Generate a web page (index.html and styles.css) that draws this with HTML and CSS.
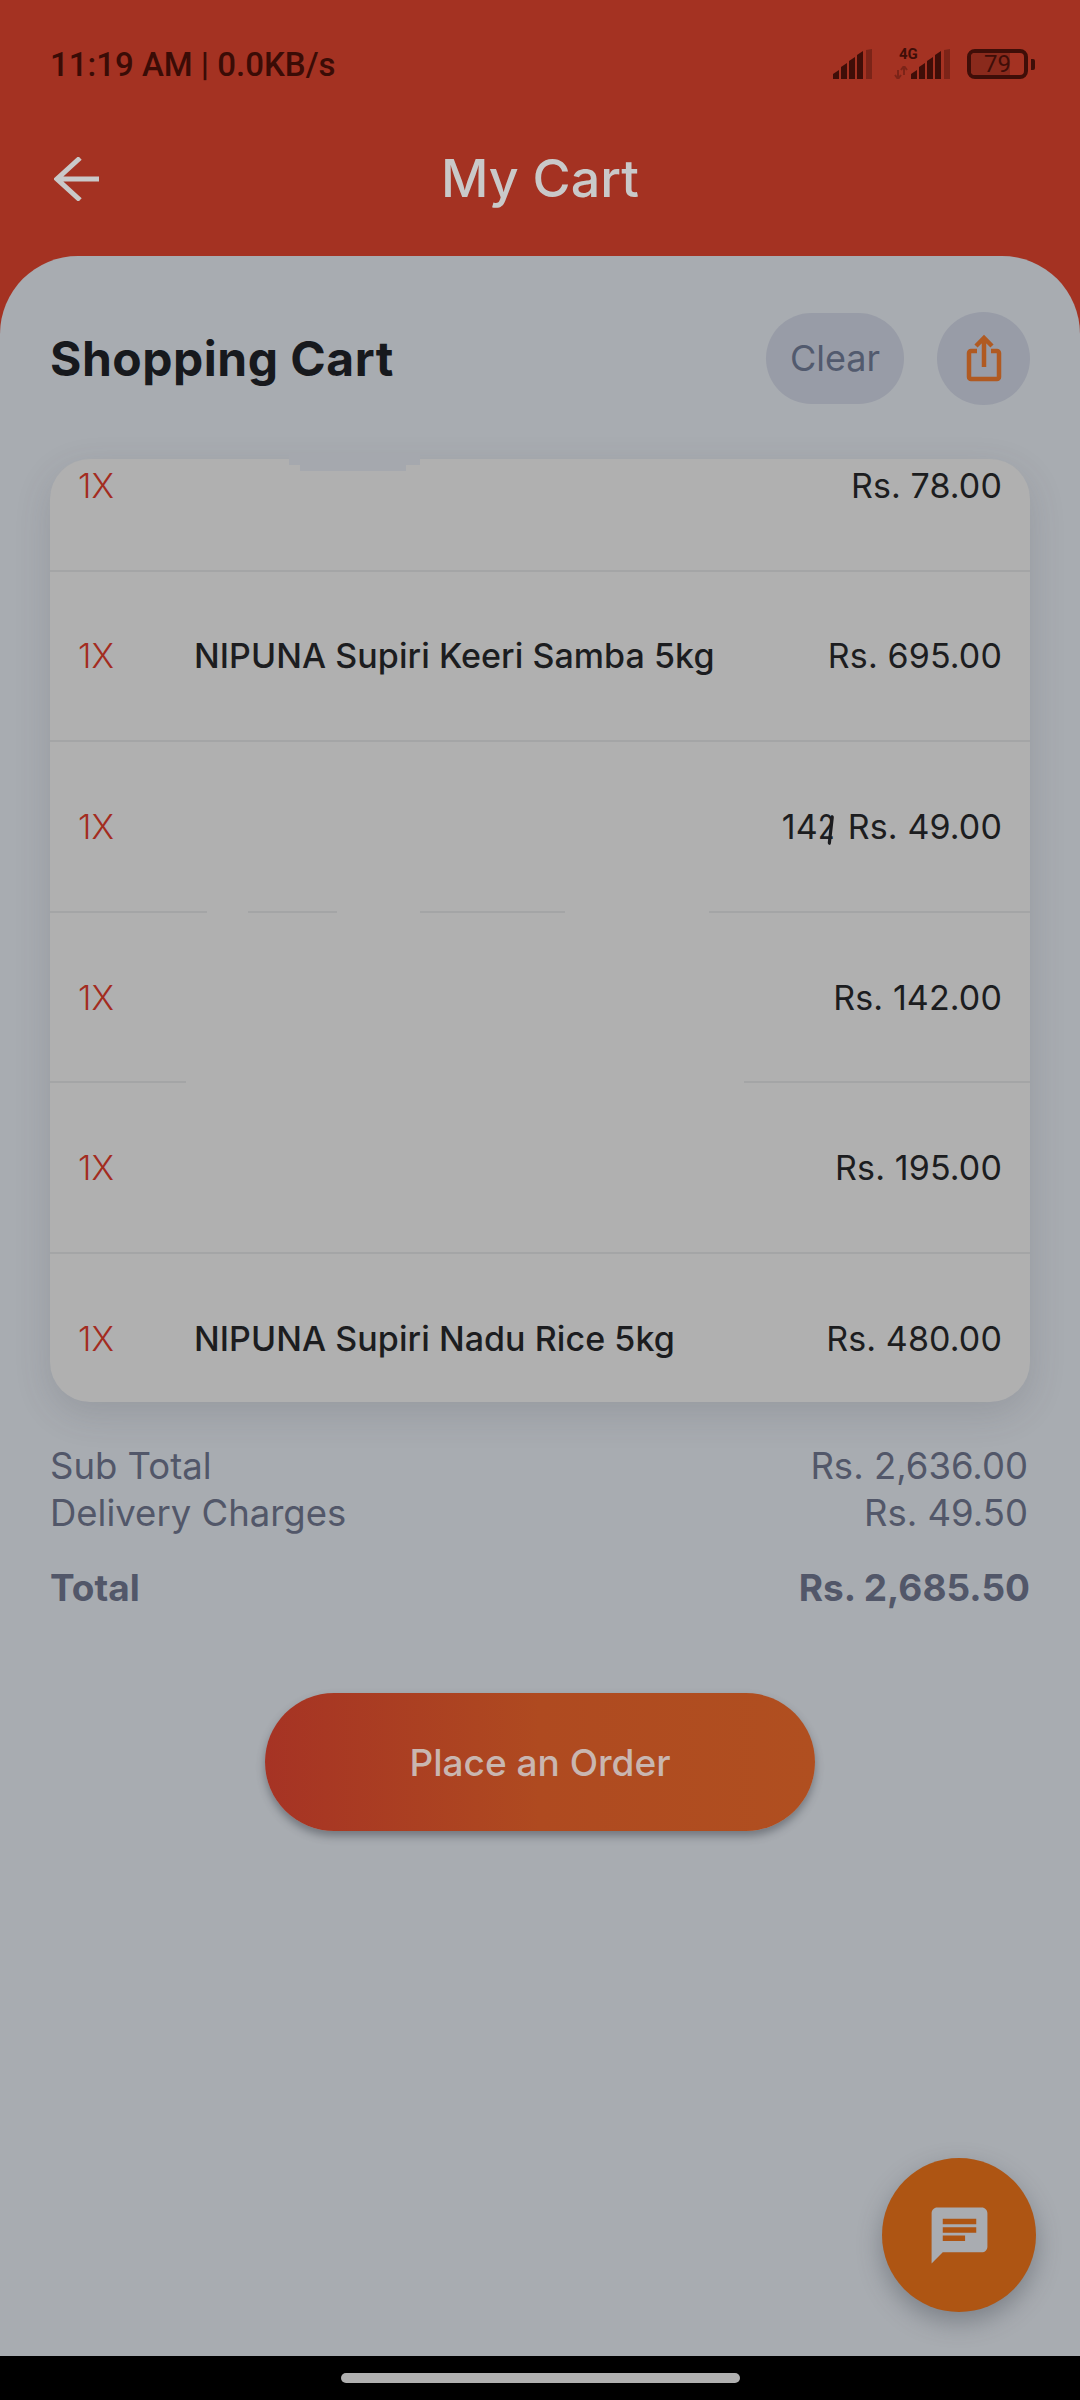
FILE: index.html
```html
<!DOCTYPE html>
<html lang="en">
<head>
  <meta charset="UTF-8" />
  <meta name="viewport" content="width=device-width, initial-scale=1.0"/>
  <title>My Cart</title>
  <link rel="stylesheet" href="styles.css">
</head>
<body>
  <div class="screen">
    <div class="status-bar">
      <span class="clock">11:19 AM | 0.0KB/s</span>
      <div class="status-icons">
        <svg class="signal" width="40" height="30" viewBox="0 0 40 30">
          <path class="on" d="M0 30v-5l6-4v9zM8 30V18l6-4v16zM16 30V12l6-4v22zM24 30V6l6-4v28z"/>
          <path class="off" d="M33 30V1l6-1v30z"/>
        </svg>
        <div class="net">
          <span class="net-label">4G</span>
          <svg class="net-arrows" width="14" height="13" viewBox="0 0 14 13">
            <path d="M4 13V4M1 9l3 4 3-4M10 0v9M7 4l3-4 3 4" fill="none" stroke="#7c2418" stroke-width="2"/>
          </svg>
        </div>
        <svg class="signal" width="40" height="30" viewBox="0 0 40 30">
          <path class="on" d="M0 30v-5l6-4v9zM8 30V18l6-4v16zM16 30V12l6-4v22zM24 30V6l6-4v28z"/>
          <path class="off" d="M33 30V1l6-1v30z"/>
        </svg>
        <div class="battery">
          <div class="battery-fill"></div>
          <span class="battery-level">79</span>
        </div>
        <div class="battery-nub"></div>
      </div>
    </div>

    <div class="app-bar">
      <svg class="back" width="46" height="44" viewBox="0 0 46 44">
        <path d="M45 22H4M26 1L3 22l23 21" fill="none" stroke="#c9c9c9" stroke-width="5"/>
      </svg>
      <h1>My Cart</h1>
    </div>

    <div class="sheet">
      <div class="sheet-head">
        <h2>Shopping Cart</h2>
        <div class="actions">
          <button class="clear-btn">Clear</button>
          <button class="share-btn">
            <svg width="36" height="48" viewBox="0 0 36 48">
              <path d="M11 17H5a2 2 0 0 0-2 2v24a2 2 0 0 0 2 2h26a2 2 0 0 0 2-2V19a2 2 0 0 0-2-2h-6" fill="none" stroke="#b05a22" stroke-width="4.5"/>
              <path d="M18 33V5M10 12l8-8 8 8" fill="none" stroke="#b05a22" stroke-width="4.5"/>
            </svg>
          </button>
        </div>
      </div>

      <div class="cart-card">
        <div class="cart-list">
          <div class="cart-row">
            <span class="qty">1X</span>
            <span class="name"></span>
            <span class="price">Rs. 78.00</span>
          </div>
          <div class="cart-row">
            <span class="qty">1X</span>
            <span class="name">NIPUNA Supiri Keeri Samba 5kg</span>
            <span class="price">Rs. 695.00</span>
          </div>
          <div class="cart-row">
            <span class="qty">1X</span>
            <span class="name name-end">14<span class="glitch">2</span></span>
            <span class="price">Rs. 49.00</span>
          </div>
          <div class="cart-row">
            <span class="qty">1X</span>
            <span class="name"></span>
            <span class="price">Rs. 142.00</span>
          </div>
          <div class="cart-row">
            <span class="qty">1X</span>
            <span class="name"></span>
            <span class="price">Rs. 195.00</span>
          </div>
          <div class="cart-row">
            <span class="qty">1X</span>
            <span class="name">NIPUNA Supiri Nadu Rice 5kg</span>
            <span class="price">Rs. 480.00</span>
          </div>
        </div>
        <!-- bits of the rules that are masked out -->
        <div class="patch patch-top"></div>
        <div class="patch patch-top-low"></div>
        <div class="patch patch-a"></div>
        <div class="patch patch-b"></div>
        <div class="patch patch-c"></div>
        <div class="patch patch-d"></div>
      </div>

      <div class="totals">
        <div class="total-row"><span>Sub Total</span><span>Rs. 2,636.00</span></div>
        <div class="total-row"><span>Delivery Charges</span><span>Rs. 49.50</span></div>
        <div class="total-row grand"><span>Total</span><span>Rs. 2,685.50</span></div>
      </div>

      <button class="order-btn">Place an Order</button>
    </div>

    <button class="chat-fab">
      <svg width="67" height="67" viewBox="0 0 24 24">
        <path fill="#a9acb1" d="M20 2H4c-1.1 0-1.99.9-1.99 2L2 22l4-4h14c1.1 0 2-.9 2-2V4c0-1.1-.9-2-2-2zM6 9h12v2H6V9zm8 5H6v-2h8v2zm4-6H6V6h12v2z"/>
      </svg>
    </button>
  </div>

  <div class="nav-bar">
    <div class="home-pill"></div>
  </div>
</body>
</html>
```

FILE: styles.css
```css
* {
  box-sizing: border-box;
}

body {
  margin: 0;
  width: 1080px;
  height: 2400px;
  overflow: hidden;
  font-family: Inter, 'Noto Sans', sans-serif;
  background: #000;
}

.screen {
  position: relative;
  height: 2356px;
  background: #a43222;
  display: flex;
  flex-direction: column;
}

/* status bar */
.status-bar {
  height: 133px;
  padding: 48px 45px 0 50px;
  display: flex;
  justify-content: space-between;
  align-items: flex-start;
}

.clock {
  font-family: Roboto, sans-serif;
  font-size: 33px;
  font-weight: 500;
  line-height: 34px;
  color: #3a0c06;
}

.status-icons {
  display: flex;
  align-items: flex-start;
  margin-top: 1px;
}

.signal .on {
  fill: #3f0e08;
}

.signal .off {
  fill: #7c2418;
}

.net {
  width: 38px;
  height: 30px;
  position: relative;
}

.net-label {
  position: absolute;
  left: 26px;
  top: -4px;
  font-family: Roboto, sans-serif;
  font-size: 15px;
  font-weight: 700;
  color: #3f0e08;
}

.net-arrows {
  position: absolute;
  left: 21px;
  top: 17px;
}

.battery {
  position: relative;
  width: 61px;
  height: 30px;
  margin-left: 16px;
  border: 4px solid #3f0e08;
  border-radius: 8px;
  overflow: hidden;
}

.battery-fill {
  width: 74%;
  height: 100%;
  background: #8a2a1c;
}

.battery-level {
  position: absolute;
  left: 0;
  right: 0;
  top: -2px;
  text-align: center;
  font-family: Roboto, sans-serif;
  font-size: 24px;
  line-height: 26px;
  color: #3f0e08;
}

.battery-nub {
  width: 4px;
  height: 11px;
  margin: 10px 0 0 3px;
  border-radius: 0 2px 2px 0;
  background: #3f0e08;
}

/* app bar */
.app-bar {
  position: relative;
  height: 123px;
  display: flex;
  align-items: center;
  justify-content: center;
  padding-bottom: 32px;
}

.app-bar h1 {
  margin: 0;
  font-size: 52px;
  font-weight: 500;
  color: #c9c9c9;
}

.back {
  position: absolute;
  left: 54px;
  top: 24px;
}

/* white sheet */
.sheet {
  flex: 1;
  background: #a8acb1;
  border-radius: 78px 78px 0 0;
  padding: 56px 50px 0;
  display: flex;
  flex-direction: column;
}

.sheet-head {
  display: flex;
  justify-content: space-between;
  align-items: center;
  height: 92px;
}

.sheet-head h2 {
  margin: 0;
  font-size: 48px;
  font-weight: 700;
  letter-spacing: 0.5px;
  color: #17191d;
}

.actions {
  display: flex;
  align-items: center;
  gap: 33px;
}

.clear-btn {
  width: 138px;
  height: 91px;
  border: none;
  border-radius: 46px;
  background: #989ca7;
  color: #525a6e;
  font-family: inherit;
  font-size: 36px;
}

.share-btn {
  width: 93px;
  height: 93px;
  border: none;
  padding: 0;
  border-radius: 50%;
  background: #989ca7;
  display: flex;
  align-items: center;
  justify-content: center;
}

/* cart list */
.cart-card {
  position: relative;
  height: 943px;
  margin-top: 55px;
  border-radius: 40px;
  background: #b0b0b0;
  box-shadow: 0 12px 36px rgba(60, 65, 75, 0.16);
}

.cart-list {
  height: 100%;
  overflow: hidden;
  border-radius: 40px;
}

.cart-row {
  height: 170.6px;
  padding: 0 28px;
  display: flex;
  align-items: center;
  border-bottom: 2px solid #a4a5a6;
  font-size: 34px;
  color: #1c1d20;
}

.cart-row:first-child {
  margin-top: -58px;
}

.qty {
  width: 116px;
  font-weight: 300;
  color: #a32c1f;
}

.name {
  flex: 1;
  font-weight: 500;
  letter-spacing: 0.06px;
}

.name-end {
  text-align: right;
  padding-right: 14px;
  font-weight: 400;
}

.glitch {
  position: relative;
  display: inline-block;
  width: 16px;
  transform: scaleX(0.8);
  transform-origin: left;
}

/* stray stroke across the last digit */
.glitch::after {
  content: "";
  position: absolute;
  left: 14px;
  top: 9px;
  width: 4px;
  height: 30px;
  border-radius: 2px;
  background: #1c1d20;
  transform: rotate(8deg);
}

.price {
  font-weight: 400;
  letter-spacing: 0.12px;
}

.patch {
  position: absolute;
  background: #b0b0b0;
}

.patch-top {
  left: 239px;
  top: -6px;
  width: 131px;
  height: 12px;
  background: #a5a8ae;
}

.patch-top-low {
  left: 250px;
  top: 6px;
  width: 106px;
  height: 6px;
  background: #a5a8ae;
}

.patch-a {
  left: 157px;
  top: 451px;
  width: 41px;
  height: 4px;
}

.patch-b {
  left: 287px;
  top: 451px;
  width: 83px;
  height: 4px;
}

.patch-c {
  left: 515px;
  top: 451px;
  width: 144px;
  height: 4px;
}

.patch-d {
  left: 136px;
  top: 622px;
  width: 558px;
  height: 4px;
}

/* totals */
.totals {
  margin-top: 41px;
  color: #525769;
  font-size: 36.5px;
}

.total-row {
  display: flex;
  justify-content: space-between;
  line-height: 47px;
  padding-right: 2px;
}

.total-row.grand {
  margin-top: 27px;
  font-size: 37px;
  font-weight: 700;
  padding-right: 0;
}

.order-btn {
  align-self: center;
  width: 550px;
  height: 138px;
  margin-top: 82px;
  border: none;
  border-radius: 69px;
  background: linear-gradient(90deg, #a63324 0%, #af4a20 50%, #b04f20 100%);
  box-shadow: 0 5px 8px rgba(50, 55, 65, 0.45);
  color: #c9b6b0;
  font-family: inherit;
  font-size: 37px;
  font-weight: 500;
}

.chat-fab {
  position: absolute;
  left: 882px;
  top: 2158px;
  width: 154px;
  height: 154px;
  padding: 0;
  border: none;
  border-radius: 50%;
  background: #ae5513;
  box-shadow: 0 10px 24px rgba(60, 65, 75, 0.4);
  display: flex;
  align-items: center;
  justify-content: center;
}

/* system nav */
.nav-bar {
  height: 44px;
  background: #000;
  display: flex;
  justify-content: center;
  padding-top: 17px;
}

.home-pill {
  width: 399px;
  height: 10px;
  border-radius: 5px;
  background: #b0b0b0;
}
```
